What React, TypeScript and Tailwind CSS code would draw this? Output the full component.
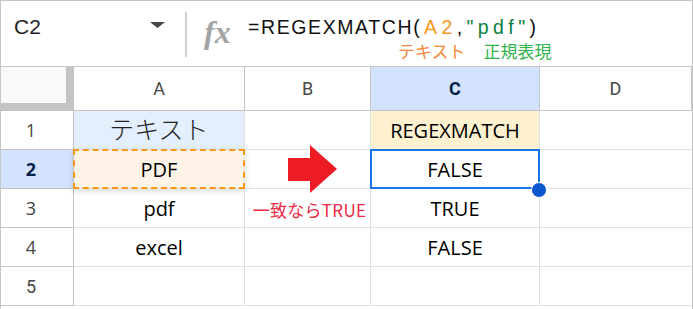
const cellFont = "font-['Open_Sans','Noto_Sans_CJK_JP',sans-serif]";

function HeaderCell({ label, w, active }: { label: string; w: string; active?: boolean }) {
  return (
    <div
      className={`${w} h-full flex items-center justify-center border-r border-b border-[#c4c4c4] text-[18px] ${
        active ? "bg-[#d3e3fd] font-bold text-[#041e49]" : "bg-white text-[#444746]"
      }`}
    >
      {label}
    </div>
  );
}

function RowHead({ n, active }: { n: number; active?: boolean }) {
  return (
    <div
      className={`w-[73px] h-full flex items-center justify-center pr-[12px] border-r border-b border-[#c4c4c4] text-[18px] ${
        active ? "bg-[#d3e3fd] font-bold text-[#041e49]" : "bg-white text-[#444746]"
      }`}
    >
      {n}
    </div>
  );
}

export default function App() {
  return (
    <div className="w-[693px] h-[309px] overflow-hidden bg-white border-t border-x border-[#c7c7c7] font-['Roboto',sans-serif] text-black">
      {/* formula bar */}
      <div className="h-[66px] flex items-start border-b border-[#c7c7c7]">
        <div className="w-[184px] flex items-start">
          <span className="pl-[13px] pt-[15px] font-['Liberation_Sans',sans-serif] text-[21px] leading-[22px] text-[#1f1f1f]">C2</span>
          <svg className="ml-auto mr-[20px] mt-[21px]" width="15" height="6" viewBox="0 0 15 6">
            <polygon points="0,0 15,0 7.5,6" fill="#444746" />
          </svg>
        </div>
        <div className="w-[2px] h-[45px] mt-[11px] bg-[#d0d0d0]" />
        <div className="w-[30px] ml-[17px] pt-[18px] font-['Liberation_Serif',serif] italic font-bold text-[32px] leading-[26px] text-[#a3a3a3]">
          fx
        </div>
        <div className="ml-[14px] flex flex-col">
          <div className="pt-[15px] font-['Liberation_Sans',sans-serif] text-[19.5px] leading-[22px] whitespace-nowrap text-[#111]">
            <span className="tracking-[1.6px]">=REGEXMATCH</span>
            <span className="tracking-[4.4px]">
              (<span className="text-[#f7981d]">A2</span>,<span className="text-[#0b8043]">"pdf"</span>)
            </span>
          </div>
          <div className="flex gap-[18px] pl-[150px] mt-[4px] font-['Noto_Sans_CJK_JP',sans-serif] text-[17px] leading-[18px]">
            <span className="text-[#f5873a]">テキスト</span>
            <span className="text-[#2fb34c]">正規表現</span>
          </div>
        </div>
      </div>

      {/* sheet */}
      <div className="relative">
        <div className="flex h-[44px]">
          <div className="w-[73px] h-full bg-[#f8f9fa] border-r-[8px] border-b-[8px] border-[#c4c4c4]" />
          <HeaderCell label="A" w="w-[171px]" />
          <HeaderCell label="B" w="w-[126px]" />
          <HeaderCell label="C" w="w-[169px]" active />
          <HeaderCell label="D" w="w-[152px]" />
        </div>

        <div className={`flex h-[39px] ${cellFont} text-[20px]`}>
          <RowHead n={1} />
          <div className="w-[171px] flex items-center justify-center bg-[#e3effc] border-r border-b border-[#e1e1e1] text-[25px] font-light text-[#222]">
            テキスト
          </div>
          <div className="w-[126px] border-r border-b border-[#e1e1e1]" />
          <div className="w-[169px] flex items-center justify-center pt-[2px] bg-[#fdf1cf] border-r border-b border-[#e1e1e1]">
            REGEXMATCH
          </div>
          <div className="w-[152px] border-b border-[#e1e1e1]" />
        </div>

        <div className={`flex h-[39px] ${cellFont} text-[20px]`}>
          <RowHead n={2} active />
          <div className="relative w-[171px] flex items-center justify-center pt-[2px] bg-[#fdf4e7] border-r border-b border-[#e1e1e1]">
            <div className="absolute -inset-[1px] border-2 border-dashed border-[#f6981e] shadow-[0_2px_6px_rgba(0,0,0,0.15)]" />
            PDF
          </div>
          <div className="w-[126px] border-r border-b border-[#e1e1e1]" />
          <div className="relative w-[169px] flex items-center justify-center pt-[2px] border-r border-b border-[#e1e1e1]">
            <div className="absolute -left-[1px] -top-[1px] -right-[1px] -bottom-[1px] border-2 border-[#1a73e8]" />
            <div className="absolute left-[160px] top-[32px] w-[16px] h-[16px] rounded-full bg-[#0b57d0] border border-white" />
            FALSE
          </div>
          <div className="w-[152px] border-b border-[#e1e1e1]" />
        </div>

        <div className={`flex h-[39px] ${cellFont} text-[20px]`}>
          <RowHead n={3} />
          <div className="w-[171px] flex items-center justify-center pt-[2px] border-r border-b border-[#e1e1e1]">pdf</div>
          <div className="w-[126px] flex items-center justify-center pt-[4px] pl-[4px] border-r border-b border-[#e1e1e1] font-['Noto_Sans_CJK_JP',sans-serif] text-[17px] tracking-[0.3px] text-[#ed2a46] whitespace-nowrap">
            一致ならTRUE
          </div>
          <div className="w-[169px] flex items-center justify-center pt-[2px] border-r border-b border-[#e1e1e1]">TRUE</div>
          <div className="w-[152px] border-b border-[#e1e1e1]" />
        </div>

        <div className={`flex h-[39px] ${cellFont} text-[20px]`}>
          <RowHead n={4} />
          <div className="w-[171px] flex items-center justify-center pt-[2px] border-r border-b border-[#e1e1e1]">excel</div>
          <div className="w-[126px] border-r border-b border-[#e1e1e1]" />
          <div className="w-[169px] flex items-center justify-center pt-[2px] border-r border-b border-[#e1e1e1]">FALSE</div>
          <div className="w-[152px] border-b border-[#e1e1e1]" />
        </div>

        <div className="flex h-[39px]">
          <RowHead n={5} />
          <div className="w-[171px] border-r border-b border-[#e1e1e1]" />
          <div className="w-[126px] border-r border-b border-[#e1e1e1]" />
          <div className="w-[169px] border-r border-b border-[#e1e1e1]" />
          <div className="w-[152px] border-b border-[#e1e1e1]" />
        </div>

        {/* red arrow annotation */}
        <svg className="absolute left-[287px] top-[78px]" width="50" height="49" viewBox="0 0 50 49">
          <polygon points="0,13 22,13 22,0 49,24 22,48 22,36 0,36" fill="#ed1c24" />
        </svg>
      </div>
    </div>
  );
}
